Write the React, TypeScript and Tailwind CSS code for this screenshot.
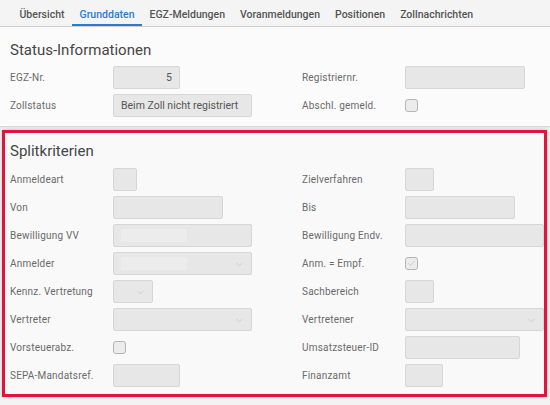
import { ChevronDown, Check } from "lucide-react";

const font = { fontFamily: "Roboto, 'Liberation Sans', sans-serif" };

const tabs = ["Übersicht", "Grunddaten", "EGZ-Meldungen", "Voranmeldungen", "Positionen", "Zollnachrichten"];

function Input({ w, value, hint, select, right }: { w: string; value?: string; hint?: boolean; select?: boolean; right?: boolean }) {
  return (
    <div
      className={`${w} relative h-[23px] shrink-0 rounded-[2px] border border-[#d6d6d6] bg-[#e7e7e7] flex items-center px-[7px] text-[10.5px] text-[#555]`}
    >
      {hint && <div className="h-[13px] w-[66px] bg-[#ececec]" />}
      {value && <span className={`flex-1 truncate ${right ? "text-right" : ""}`}>{value}</span>}
      {select && <ChevronDown className="absolute right-[6px] top-[6px] text-[#c4c4c4]" size={11} strokeWidth={1.5} />}
    </div>
  );
}

function Checkbox({ checked }: { checked?: boolean }) {
  return (
    <div className="w-[13px] h-[13px] rounded-[3px] border border-[#b5b5b5] bg-[#ececec] flex items-center justify-center">
      {checked && <Check size={9} strokeWidth={1.5} className="text-[#b0b0b0]" />}
    </div>
  );
}

function Field({ label, children }: { label: string; children: React.ReactNode }) {
  return (
    <div className="flex items-center h-[28px]">
      <div className="w-[103px] shrink-0 text-[10px] text-[#6a6a6a] tracking-[0.2px]">{label}</div>
      {children}
    </div>
  );
}

function Row({ left, right }: { left: React.ReactNode; right: React.ReactNode }) {
  return (
    <div className="flex">
      <div className="w-[292px] shrink-0">{left}</div>
      <div className="flex-1">{right}</div>
    </div>
  );
}

export default function App() {
  return (
    <div className="w-[550px] h-[405px] bg-[#f3f3f3] overflow-hidden" style={font}>
      <div className="h-[27px] bg-[#f4f4f4] border-b border-[#cfcfcf] flex items-end pl-[12px] shadow-[0_1px_1px_rgba(0,0,0,0.08)]">
        {tabs.map((t) => (
          <div
            key={t}
            className={`h-[26px] pt-[5px] px-[7.5px] flex items-center text-[10.5px] font-medium ${
              t === "Grunddaten" ? "text-[#2b7bd0] border-b-2 border-[#2b7bd0]" : "text-[#555] border-b-2 border-transparent"
            }`}
          >
            {t}
          </div>
        ))}
      </div>

      <div className="h-[100px] bg-[#fbfbfb] border-b border-[#d9d9d9] pl-[10px] pt-[13px] shadow-[0_1px_2px_rgba(0,0,0,0.06)]">
        <div className="h-[20px] leading-[20px] text-[15px] text-[#454545]">Status-Informationen</div>
        <div className="mt-[3.5px]">
          <Row
            left={
              <Field label="EGZ-Nr.">
                <Input w="w-[67px]" value="5" right />
              </Field>
            }
            right={
              <Field label="Registriernr.">
                <Input w="w-[120px]" />
              </Field>
            }
          />
          <Row
            left={
              <Field label="Zollstatus">
                <Input w="w-[139px]" value="Beim Zoll nicht registriert" />
              </Field>
            }
            right={
              <Field label="Abschl. gemeld.">
                <Checkbox />
              </Field>
            }
          />
        </div>
      </div>

      <div className="mx-[2px] mt-[3px] w-[545px] h-[267px] border-[3px] border-[#e2143c] bg-[#f9f9f9] pl-[5px] pt-[8px] shadow-[0_0_3px_rgba(0,0,0,0.25)]">
        <div className="h-[20px] leading-[20px] text-[15px] text-[#454545]">Splitkriterien</div>
        <div className="mt-[4.5px]">
          <Row
            left={<Field label="Anmeldeart"><Input w="w-[24px]" /></Field>}
            right={<Field label="Zielverfahren"><Input w="w-[29px]" /></Field>}
          />
          <Row
            left={<Field label="Von"><Input w="w-[110px]" /></Field>}
            right={<Field label="Bis"><Input w="w-[110px]" /></Field>}
          />
          <Row
            left={<Field label="Bewilligung VV"><Input w="w-[139px]" hint /></Field>}
            right={<Field label="Bewilligung Endv."><Input w="w-[139px]" /></Field>}
          />
          <Row
            left={<Field label="Anmelder"><Input w="w-[139px]" hint select /></Field>}
            right={<Field label="Anm. = Empf."><Checkbox checked /></Field>}
          />
          <Row
            left={<Field label="Kennz. Vertretung"><Input w="w-[40px]" select /></Field>}
            right={<Field label="Sachbereich"><Input w="w-[29px]" /></Field>}
          />
          <Row
            left={<Field label="Vertreter"><Input w="w-[139px]" select /></Field>}
            right={<Field label="Vertretener"><Input w="w-[139px]" select /></Field>}
          />
          <Row
            left={<Field label="Vorsteuerabz."><Checkbox /></Field>}
            right={<Field label="Umsatzsteuer-ID"><Input w="w-[115px]" /></Field>}
          />
          <Row
            left={<Field label="SEPA-Mandatsref."><Input w="w-[67px]" /></Field>}
            right={<Field label="Finanzamt"><Input w="w-[38px]" /></Field>}
          />
        </div>
      </div>
    </div>
  );
}
